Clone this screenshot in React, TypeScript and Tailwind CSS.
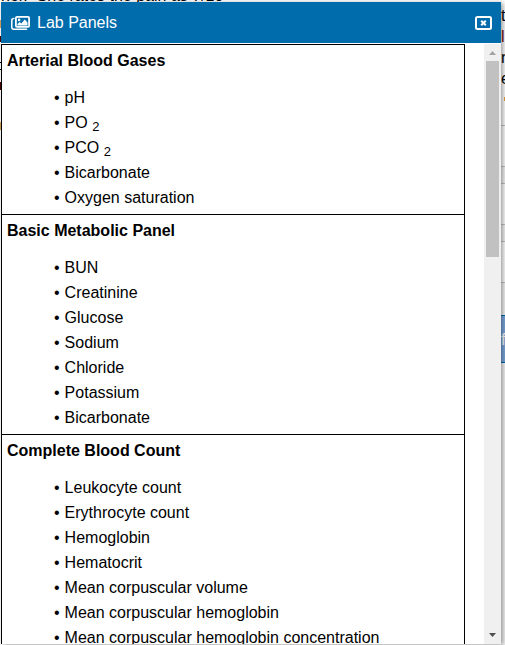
import { clsx } from "clsx";
import type { ReactNode } from "react";

type Panel = {
  title: string;
  items: ReactNode[];
};

const PANELS: Panel[] = [
  {
    title: "Arterial Blood Gases",
    items: [
      "pH",
      <>PO <sub className="text-[13px]">2</sub></>,
      <>PCO <sub className="text-[13px]">2</sub></>,
      "Bicarbonate",
      "Oxygen saturation",
    ],
  },
  {
    title: "Basic Metabolic Panel",
    items: ["BUN", "Creatinine", "Glucose", "Sodium", "Chloride", "Potassium", "Bicarbonate"],
  },
  {
    title: "Complete Blood Count",
    items: [
      "Leukocyte count",
      "Erythrocyte count",
      "Hemoglobin",
      "Hematocrit",
      "Mean corpuscular volume",
      "Mean corpuscular hemoglobin",
      "Mean corpuscular hemoglobin concentration",
    ],
  },
];

function ImagesIcon() {
  return (
    <svg viewBox="0 0 20 16" className="h-4 w-5 shrink-0" fill="none" stroke="currentColor" aria-hidden="true">
      <rect x="5.900" y="1.900" width="13.200" height="10" rx="1.200" strokeWidth="1.800" />
      <path d="M3.800 3.500Q1.800 3.500 1.800 5.500v6.800q0 2 2 2h12.700" strokeWidth="1.500" strokeLinecap="round" />
      <path d="M7.500 10.500V9l2.200-2 1.600 1.500 3.400-4L17.500 7.500v3z" fill="currentColor" stroke="none" />
      <circle cx="9.100" cy="4.900" r="1.300" fill="currentColor" stroke="none" />
    </svg>
  );
}

function CloseIcon() {
  return (
    <svg viewBox="0 0 17 14" className="h-3.5 w-[17px]" fill="none" stroke="currentColor" aria-hidden="true">
      <rect x="1" y="1" width="15" height="12" rx="1.500" strokeWidth="2" />
      <path d="m6.200 4.700 4.600 4.600m0-4.600L6.200 9.300" strokeWidth="2" />
    </svg>
  );
}

function Scrollbar() {
  return (
    <div className="flex w-[17px] shrink-0 flex-col items-center bg-[#f0f0f0]" aria-hidden="true">
      <svg viewBox="0 0 17 17" className="h-[17px] w-[17px] shrink-0 fill-[#a3a3a3]">
        <path d="M5 11h7L8.500 7z" />
      </svg>
      <div className="h-[196px] w-[13px] bg-[#c1c1c1]" />
      <svg viewBox="0 0 17 17" className="mt-auto h-[17px] w-[17px] shrink-0 fill-[#505050]">
        <path d="M5 6h7L8.500 10z" />
      </svg>
    </div>
  );
}

// Page under the dialog, only its edges stay visible
function CaseNotes() {
  return (
    <div className="flex h-full justify-between" aria-hidden="true">
      <div className="flex w-px shrink-0 flex-col pt-5">
        <div className="h-2 bg-[#d9a35c]" />
        <div className="mt-2 h-1.5 bg-[#4a0606]" />
        <div className="mt-5 h-2 border-y border-black" />
        <div className="mt-3 h-2 bg-[#4a0606]" />
        <div className="mt-8 h-2 bg-[#d9a35c]" />
      </div>
      <p className="-mt-3 flex-1 whitespace-nowrap leading-4">hor. &nbsp;She rates the pain as 7/10</p>
      <div className="flex w-1 shrink-0 flex-col overflow-hidden pt-[5px] leading-[21px]">
        <p>t</p>
        <p className="text-[#7a0c0c]">l</p>
        <p>r</p>
        <p>e</p>
        <div className="mt-2 h-1 w-px self-end bg-[#e8a33d]" />
        <div className="mt-6 flex flex-1 flex-col gap-4 bg-[#f5f5f5]">
          <div className="h-[42px] border-y border-[#c3c3c8] bg-white" />
          <div className="h-[42px] border-y border-[#c3c3c8] bg-white" />
          <div className="h-[42px] border-y border-[#c3c3c8] bg-white" />
          <div className="mt-4 flex h-12 items-center border-y border-[#006cac] bg-[#7ca6dc] text-white">f</div>
        </div>
      </div>
    </div>
  );
}

export default function App() {
  return (
    <div className="relative h-screen overflow-hidden bg-white font-['Liberation_Sans',Arial,sans-serif] text-base text-black">
      <CaseNotes />
      <div
        role="dialog"
        aria-labelledby="dialog-title"
        className="absolute top-0.5 right-1 bottom-px left-px flex flex-col bg-white shadow-[2px_1px_5px_rgba(0,0,0,0.4)]"
      >
        <header className="flex h-[41px] shrink-0 items-center gap-[7px] bg-[#006cac] px-[9px] text-white">
          <ImagesIcon />
          <h2 id="dialog-title" className="flex-1">Lab Panels</h2>
          <button type="button" aria-label="Close">
            <CloseIcon />
          </button>
        </header>
        <div className="flex min-h-0 flex-1 pt-px">
          <div className="min-w-0 flex-1 overflow-hidden pr-[19px]">
            {PANELS.map((panel, i) => (
              <section
                key={panel.title}
                className={clsx("border-x border-t border-black px-[5px] pb-1", i === PANELS.length - 1 && "border-b")}
              >
                <h3 className="pt-1 leading-6 font-bold">{panel.title}</h3>
                <ul className="pt-3 pl-[47px] leading-[25px]">
                  {panel.items.map((item, n) => (
                    <li key={n} className="flex gap-[5px]">
                      <span>•</span>
                      <span>{item}</span>
                    </li>
                  ))}
                </ul>
              </section>
            ))}
          </div>
          <Scrollbar />
        </div>
      </div>
    </div>
  );
}
